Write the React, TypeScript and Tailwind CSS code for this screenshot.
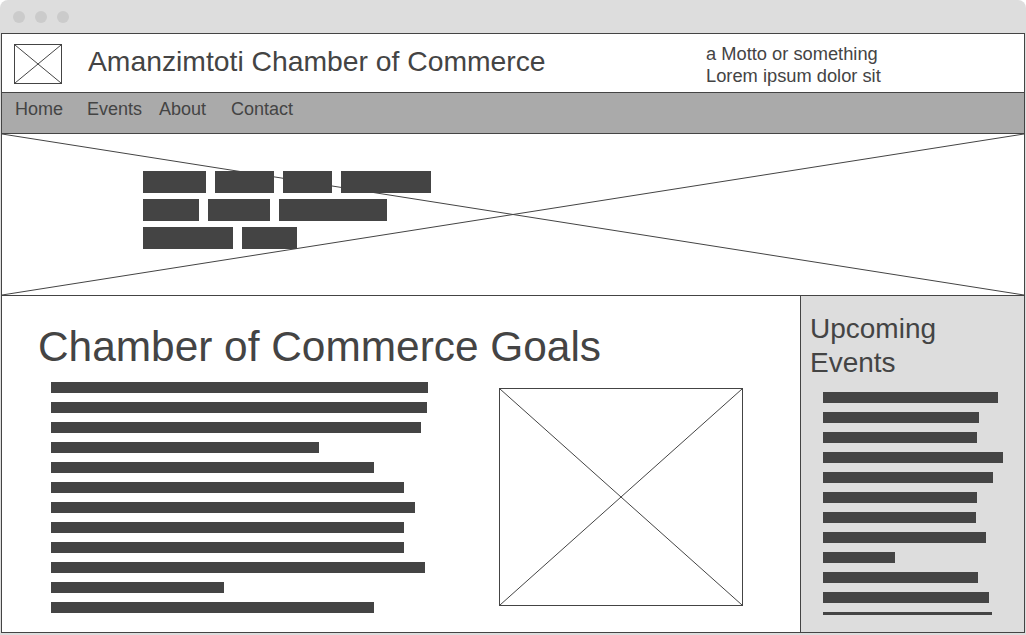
const heroRows = [
  [63, 59, 49, 90],
  [56, 62, 108],
  [90, 55],
];

const goalBars = [377, 376, 370, 268, 323, 353, 364, 353, 353, 374, 173, 323];

const eventBars = [175, 156, 154, 180, 170, 154, 153, 163, 72, 155, 166, 169];

function CrossBox({ className }: { className?: string }) {
  return (
    <div className={`relative border border-[#444444] ${className ?? ""}`}>
      <svg
        className="absolute inset-0 h-full w-full"
        viewBox="0 0 100 100"
        preserveAspectRatio="none"
      >
        <line x1="0" y1="0" x2="100" y2="100" stroke="#444444" strokeWidth="1" vectorEffect="non-scaling-stroke" />
        <line x1="100" y1="0" x2="0" y2="100" stroke="#444444" strokeWidth="1" vectorEffect="non-scaling-stroke" />
      </svg>
    </div>
  );
}

export default function App() {
  return (
    <div
      className="w-[1026px] h-[635px] overflow-hidden rounded-t-lg bg-[#dddddd] text-[#444444]"
      style={{ fontFamily: '"Liberation Sans", Arial, sans-serif' }}
    >
      {/* Window chrome */}
      <div className="flex h-[33px] items-center gap-[10px] pl-[13px]">
        <span className="h-3 w-3 rounded-full bg-[#cbcbcb]" />
        <span className="h-3 w-3 rounded-full bg-[#cbcbcb]" />
        <span className="h-3 w-3 rounded-full bg-[#cbcbcb]" />
      </div>

      {/* Page frame */}
      <div className="ml-[1px] flex h-[600px] w-[1024px] flex-col border border-[#444444] bg-white">
        {/* Header */}
        <header className="flex h-[59px] shrink-0 border-b border-[#444444]">
          <CrossBox className="ml-[12px] mt-[10px] h-[40px] w-[48px]" />
          <h1 className="ml-[26px] mt-[9px] w-[618px] text-[28.3px] leading-[36px]">
            Amanzimtoti Chamber of Commerce
          </h1>
          <div className="mt-[9px] text-[18.3px] leading-[22px]">
            <p>a Motto or something</p>
            <p>Lorem ipsum dolor sit</p>
          </div>
        </header>

        {/* Nav */}
        <nav className="flex h-[41px] shrink-0 items-start border-b border-[#444444] bg-[#aaaaaa] pl-[13px] pt-[4px] text-[18px] leading-[24px]">
          <a className="w-[72px]">Home</a>
          <a className="w-[72px]">Events</a>
          <a className="w-[72px]">About</a>
          <a>Contact</a>
        </nav>

        {/* Hero */}
        <section className="relative h-[162px] shrink-0 border-b border-[#444444]">
          <svg
            className="absolute inset-0 h-full w-full"
            viewBox="0 0 100 100"
            preserveAspectRatio="none"
          >
            <line x1="0" y1="0" x2="100" y2="100" stroke="#444444" strokeWidth="1" vectorEffect="non-scaling-stroke" />
            <line x1="100" y1="0" x2="0" y2="100" stroke="#444444" strokeWidth="1" vectorEffect="non-scaling-stroke" />
          </svg>
          <div className="relative flex flex-col gap-[6px] pl-[141px] pt-[37px]">
            {heroRows.map((row, i) => (
              <div key={i} className="flex gap-[9px]">
                {row.map((w, j) => (
                  <span key={j} className="h-[22px] bg-[#444444]" style={{ width: w }} />
                ))}
              </div>
            ))}
          </div>
        </section>

        {/* Main */}
        <main className="flex min-h-0 flex-1">
          <section className="w-[798px] pl-[36px] pt-[27px]">
            <h2 className="text-[42.4px] leading-[48px]">Chamber of Commerce Goals</h2>
            <div className="mt-[11px] flex items-start">
              <div className="ml-[13px] flex w-[448px] flex-col gap-[9px]">
                {goalBars.map((w, i) => (
                  <span key={i} className="h-[11px] bg-[#444444]" style={{ width: w }} />
                ))}
              </div>
              <CrossBox className="mt-[6px] h-[218px] w-[244px]" />
            </div>
          </section>

          <aside className="flex-1 border-l border-[#444444] bg-[#dddddd] pl-[9px] pt-[16px]">
            <h3 className="text-[28px] leading-[34px]">
              Upcoming
              <br />
              Events
            </h3>
            <div className="ml-[13px] mt-[12px] flex h-[223px] flex-col gap-[9px] overflow-hidden">
              {eventBars.map((w, i) => (
                <span key={i} className="h-[11px] shrink-0 bg-[#444444]" style={{ width: w }} />
              ))}
            </div>
          </aside>
        </main>
      </div>
    </div>
  );
}
